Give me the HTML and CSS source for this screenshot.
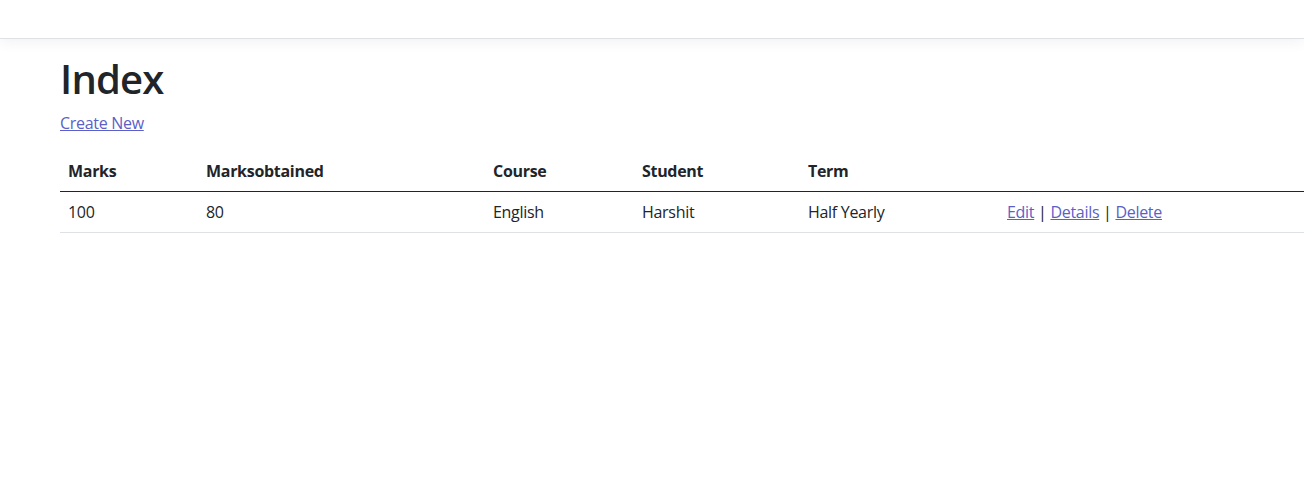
FILE: index.html
```html
<!DOCTYPE html>
<html lang="en">
<head>
    <meta charset="UTF-8">
    <meta name="viewport" content="width=device-width, initial-scale=1.0">
    <title>Index</title>
    <link rel="stylesheet" href="styles.css">
</head>
<body>

    <header class="navbar"></header>

    <div class="container">
        <main>
            <h1>Index</h1>

            <p>
                <a href="#">Create New</a>
            </p>

            <table class="table">
                <thead>
                    <tr>
                        <th class="col-marks">Marks</th>
                        <th class="col-obtained">Marksobtained</th>
                        <th class="col-course">Course</th>
                        <th class="col-student">Student</th>
                        <th class="col-term">Term</th>
                        <th></th>
                    </tr>
                </thead>
                <tbody>
                    <tr>
                        <td>100</td>
                        <td>80</td>
                        <td>English</td>
                        <td>Harshit</td>
                        <td>Half Yearly</td>
                        <td>
                            <a href="#">Edit</a> |
                            <a href="#">Details</a> |
                            <a href="#">Delete</a>
                        </td>
                    </tr>
                </tbody>
            </table>
        </main>
    </div>

</body>
</html>
```

FILE: styles.css
```css
body {
    font-family: "Segoe UI", "Open Sans", sans-serif;
    font-size: 16px;
    line-height: 1.5;
    letter-spacing: -0.3px;
    color: #212529;
    background-color: #fff;
    margin: 0;
}
.navbar {
    height: 38px;
    background: #fff;
    border-bottom: 1px solid #dee2e6;
    box-shadow: 0 4px 12px rgba(0, 0, 0, 0.05);
    margin-bottom: 16px;
}
.container {
    padding-left: 60px;
}
h1 {
    font-size: 40px;
    font-weight: 600;
    line-height: 1.2;
    letter-spacing: -0.8px;
    margin: 0 0 8px 0;
}
p {
    margin: 0 0 16px 0;
}
a {
    color: #5b5fc7;
    text-decoration: underline;
}
.table {
    width: 1244px;
    border-collapse: collapse;
    margin-bottom: 16px;
}
.table th,
.table td {
    padding: 8px;
    text-align: left;
    vertical-align: bottom;
}
.table th {
    font-weight: 700;
    border-bottom: 1px solid #212529;
}
.table td {
    border-bottom: 1px solid #dee2e6;
    vertical-align: top;
}
.col-marks {
    width: 122px;
}
.col-obtained {
    width: 271px;
}
.col-course {
    width: 133px;
}
.col-student {
    width: 150px;
}
.col-term {
    width: 183px;
}
```
